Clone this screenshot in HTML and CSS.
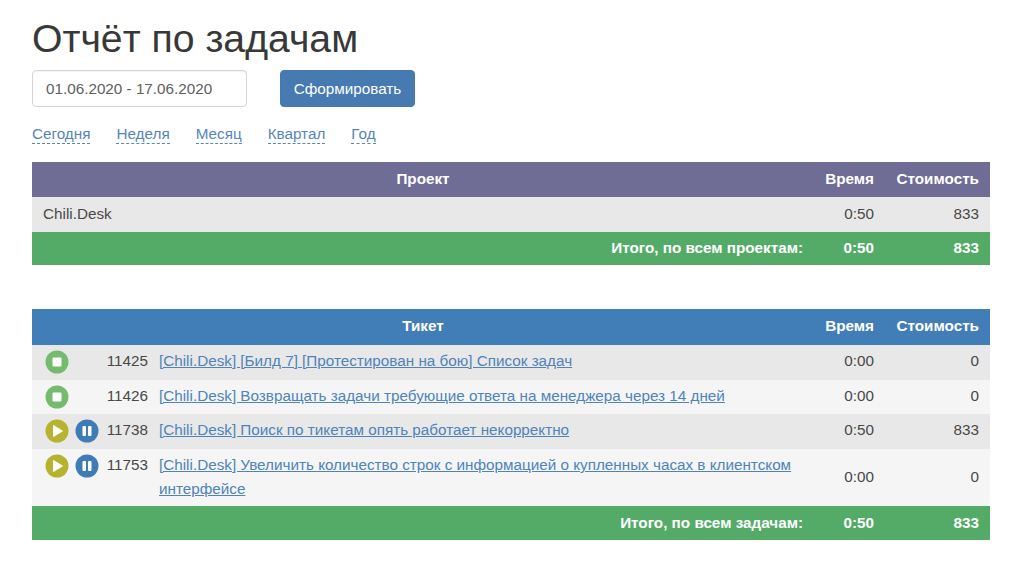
FILE: index.html
```html
<!DOCTYPE html>
<html lang="ru">
<head>
<meta charset="utf-8">
<title>Отчёт по задачам</title>
<link rel="stylesheet" href="styles.css">
</head>
<body>
<h1 class="title">Отчёт по задачам</h1>
<form class="filter">
  <input class="date-input" type="text" value="01.06.2020 - 17.06.2020">
  <button class="btn" type="button">Сформировать</button>
</form>
<nav class="periods">
  <a href="#">Сегодня</a>
  <a href="#">Неделя</a>
  <a href="#">Месяц</a>
  <a href="#">Квартал</a>
  <a href="#">Год</a>
</nav>
<table class="report first">
  <colgroup><col><col class="col-time"><col class="col-cost"></colgroup>
  <thead class="head-purple">
    <tr><th class="center">Проект</th><th class="num">Время</th><th class="num">Стоимость</th></tr>
  </thead>
  <tbody>
    <tr class="odd"><td>Chili.Desk</td><td class="num">0:50</td><td class="num">833</td></tr>
  </tbody>
  <tfoot>
    <tr><td class="num">Итого, по всем проектам:</td><td class="num">0:50</td><td class="num">833</td></tr>
  </tfoot>
</table>
<table class="report second">
  <colgroup><col class="col-icons"><col class="col-id"><col><col class="col-time"><col class="col-cost"></colgroup>
  <thead class="head-blue">
    <tr><th class="center" colspan="3">Тикет</th><th class="num">Время</th><th class="num">Стоимость</th></tr>
  </thead>
  <tbody class="tickets">
    <tr class="odd row-a">
      <td class="icons"><div class="icon-row">
        <svg class="ic" viewBox="0 0 24 24"><circle cx="12" cy="12" r="11.5" fill="#75bb6e"/><rect x="7.5" y="7.5" width="9" height="9" rx="1" fill="#fff"/></svg>
      </div></td>
      <td class="id">11425</td>
      <td class="subject"><a href="#">[Chili.Desk] [Билд 7] [Протестирован на бою] Список задач</a></td>
      <td class="num">0:00</td><td class="num">0</td>
    </tr>
    <tr class="even row-b">
      <td class="icons"><div class="icon-row">
        <svg class="ic" viewBox="0 0 24 24"><circle cx="12" cy="12" r="11.5" fill="#75bb6e"/><rect x="7.5" y="7.5" width="9" height="9" rx="1" fill="#fff"/></svg>
      </div></td>
      <td class="id">11426</td>
      <td class="subject"><a href="#">[Chili.Desk] Возвращать задачи требующие ответа на менеджера через 14 дней</a></td>
      <td class="num">0:00</td><td class="num">0</td>
    </tr>
    <tr class="odd row-a">
      <td class="icons"><div class="icon-row">
        <svg class="ic" viewBox="0 0 24 24"><circle cx="12" cy="12" r="11.5" fill="#b5b32f"/><path d="M8.5 6.5 17.5 12 8.5 17.5Z" fill="#fff" stroke="#fff" stroke-linejoin="round"/></svg>
        <svg class="ic" viewBox="0 0 24 24"><circle cx="12" cy="12" r="11.5" fill="#3f7cb6"/><rect x="7.5" y="7" width="3.5" height="10" rx="1" fill="#fff"/><rect x="13" y="7" width="3.5" height="10" rx="1" fill="#fff"/></svg>
      </div></td>
      <td class="id">11738</td>
      <td class="subject"><a href="#">[Chili.Desk] Поиск по тикетам опять работает некорректно</a></td>
      <td class="num">0:50</td><td class="num">833</td>
    </tr>
    <tr class="even">
      <td class="icons"><div class="icon-row">
        <svg class="ic" viewBox="0 0 24 24"><circle cx="12" cy="12" r="11.5" fill="#b5b32f"/><path d="M8.5 6.5 17.5 12 8.5 17.5Z" fill="#fff" stroke="#fff" stroke-linejoin="round"/></svg>
        <svg class="ic" viewBox="0 0 24 24"><circle cx="12" cy="12" r="11.5" fill="#3f7cb6"/><rect x="7.5" y="7" width="3.5" height="10" rx="1" fill="#fff"/><rect x="13" y="7" width="3.5" height="10" rx="1" fill="#fff"/></svg>
      </div></td>
      <td class="id">11753</td>
      <td class="subject"><a href="#">[Chili.Desk] Увеличить количество строк с информацией о купленных часах в клиентском интерфейсе</a></td>
      <td class="num mid">0:00</td><td class="num mid">0</td>
    </tr>
  </tbody>
  <tfoot>
    <tr><td class="num" colspan="3">Итого, по всем задачам:</td><td class="num">0:50</td><td class="num">833</td></tr>
  </tfoot>
</table>
</body>
</html>
```
FILE: styles.css
```css
* { box-sizing: border-box; }
html, body { margin: 0; height: 584px; overflow: hidden; }
body {
  padding: 0 34px 0 32px;
  background: #fff;
  color: #484848;
  font: 15.25px/24px "Liberation Sans", Arial, sans-serif;
}
.title {
  margin: 0;
  padding-top: 17px;
  font-size: 39.2px;
  line-height: 44px;
  font-weight: 400;
  color: #383838;
}
.filter {
  display: flex;
  gap: 33px;
  margin-top: 9px;
}
.date-input {
  width: 215px;
  height: 37px;
  padding: 0 13px;
  border: 1px solid #d4d4d4;
  border-radius: 4px;
  font: inherit;
  color: #606060;
  box-shadow: inset 0 1px 1px rgba(0,0,0,.05);
}
.btn {
  width: 135px;
  height: 37px;
  padding: 0;
  border: 1px solid #4379b0;
  border-radius: 4px;
  background: #477ab1;
  color: #fff;
  font: inherit;
}
.periods {
  display: flex;
  gap: 26px;
  margin-top: 15px;
  height: 24px;
}
.periods a {
  color: #5585bb;
  text-decoration: none;
  border-bottom: 1px dashed #5585bb;
  height: 22px;
  line-height: 23px;
}
.report {
  width: 958px;
  table-layout: fixed;
  border-collapse: collapse;
}
.report.first { margin-top: 16px; }
.report.second { margin-top: 44px; }
.col-time { width: 71px; }
.col-cost { width: 105px; }
.col-icons { width: 66px; }
.col-id { width: 50px; }
.report th, .report td {
  padding: 4px 11px 5px;
  vertical-align: middle;
}
.report th { height: 35px; color: #fff; font-weight: 700; }
.head-purple th { background: #6f6c95; }
.report .head-blue th { background: #417db6; height: 36px; padding: 3px 11px 6px; }
.center { text-align: center; }
.num { text-align: right; }
.report tbody td { height: 35px; }
.report .tickets td { height: auto; vertical-align: top; }
.report .tickets .row-a td { height: 35px; }
.report .tickets .row-b td { height: 34px; }
.report .tickets td.mid { vertical-align: middle; }
.odd td { background: #e8e8e8; }
.even td { background: #f5f5f5; }
.report tfoot td {
  height: 33px;
  background: #54ab67;
  color: #fff;
  font-weight: 700;
}
.report.second tfoot td { height: 34px; }
.report .tickets td.icons { padding: 5px 0 0 13px; }
.icon-row { display: flex; gap: 6px; }
.ic { display: block; width: 24px; height: 24px; flex: none; }
.report td.id { padding-left: 0; padding-right: 0; text-align: right; }
.subject a { color: #4f83ba; text-decoration: underline; }
```
